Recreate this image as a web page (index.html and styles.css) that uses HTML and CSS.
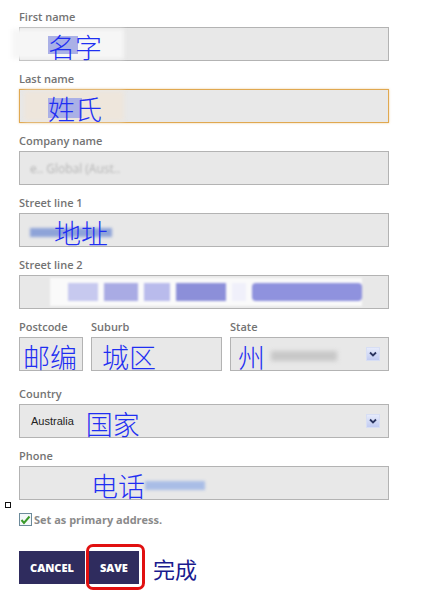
FILE: index.html
```html
<!DOCTYPE html>
<html lang="en">

<head>
    <meta charset="UTF-8">
    <meta name="viewport" content="width=device-width, initial-scale=1.0">
    <title>Edit address</title>
    <link rel="stylesheet" href="styles.css">
</head>

<body>
    <form class="address-form">
        <div class="field">
            <label class="field-label">First name</label>
            <div class="input">
                <span class="patch patch-first"></span>
                <span class="note note-first"><span class="mark mark-first"></span>名字</span>
            </div>
        </div>

        <div class="field">
            <label class="field-label">Last name</label>
            <div class="input input-focus">
                <span class="patch patch-last"></span>
                <span class="note note-last"><span class="mark mark-last"></span>姓氏</span>
            </div>
        </div>

        <div class="field">
            <label class="field-label">Company name</label>
            <div class="input">
                <span class="fuzzy fuzzy-company">e.. Global (Aust..</span>
            </div>
        </div>

        <div class="field">
            <label class="field-label">Street line 1</label>
            <div class="input">
                <span class="bar bar-street"></span>
                <span class="note note-street">地址</span>
            </div>
        </div>

        <div class="field">
            <label class="field-label">Street line 2</label>
            <div class="input">
                <div class="pixels">
                    <span class="px px-a"></span>
                    <span class="px px-b"></span>
                    <span class="px px-c"></span>
                    <span class="px px-d"></span>
                    <span class="px px-e"></span>
                    <span class="px px-f"></span>
                </div>
            </div>
        </div>

        <div class="field-row">
            <div class="field postcode">
                <label class="field-label">Postcode</label>
                <div class="input input-tight">
                    <span class="note">邮编</span>
                </div>
            </div>
            <div class="field suburb">
                <label class="field-label">Suburb</label>
                <div class="input">
                    <span class="note">城区</span>
                </div>
            </div>
            <div class="field state">
                <label class="field-label">State</label>
                <div class="input select">
                    <span class="note">州</span>
                    <span class="fuzzy-grey"></span>
                    <span class="arrow">
                        <svg width="8" height="6" viewBox="0 0 8 6"><path d="M1 1.5 L4 4.5 L7 1.5" fill="none" stroke="#2b3560" stroke-width="1.8"/></svg>
                    </span>
                </div>
            </div>
        </div>

        <div class="field country">
            <label class="field-label">Country</label>
            <div class="input select">
                <span class="option">Australia</span>
                <span class="note note-country">国家</span>
                <span class="arrow">
                    <svg width="8" height="6" viewBox="0 0 8 6"><path d="M1 1.5 L4 4.5 L7 1.5" fill="none" stroke="#2b3560" stroke-width="1.8"/></svg>
                </span>
            </div>
        </div>

        <div class="field">
            <label class="field-label">Phone</label>
            <div class="input">
                <span class="note note-phone">电话</span>
                <span class="bar bar-phone"></span>
            </div>
        </div>

        <div class="stray"></div>

        <label class="primary">
            <span class="check">
                <svg width="11" height="10" viewBox="0 0 11 10"><path d="M1.5 5 L4 8 L9.5 1.5" fill="none" stroke="#3a9a2a" stroke-width="2"/></svg>
            </span>
            Set as primary address.
        </label>

        <div class="actions">
            <button type="button" class="btn">Cancel</button>
            <span class="highlight">
                <button type="button" class="btn">Save</button>
            </span>
            <span class="done">完成</span>
        </div>
    </form>
</body>

</html>
```

FILE: styles.css
```css
body {
    margin: 0;
    background-color: white;
    font-family: "Open Sans", Arial, sans-serif;
}

.address-form {
    padding: 10px 0 0 19px;
    width: 370px;
}

.field {
    margin-bottom: 11px;
}

.field-label {
    display: block;
    font-size: 11px;
    font-weight: 600;
    line-height: 14px;
    color: #737373;
    margin-bottom: 3px;
}

.input {
    position: relative;
    height: 34px;
    box-sizing: border-box;
    border: 1px solid #b3b3b3;
    background-color: #e8e8e8;
    display: flex;
    align-items: center;
    padding-left: 10px;
}

.input-focus {
    border-color: #e0a850;
    box-shadow: 0 0 2px rgba(224, 168, 80, 0.6);
}

.note {
    position: relative;
    font-family: "Noto Sans CJK SC", sans-serif;
    font-size: 27px;
    font-weight: 300;
    line-height: 34px;
    color: #1f2ff2;
    margin-top: 6px;
}

.patch {
    position: absolute;
    top: 1px;
    bottom: 1px;
    background-color: #f6f6f6;
    filter: blur(2px);
}

.patch-first {
    left: -8px;
    width: 112px;
}

.patch-last {
    left: 4px;
    width: 100px;
    background-color: #eee6dc;
}

.mark {
    position: absolute;
    background-color: #aab0e6;
    z-index: -1;
}

.note-first {
    margin-left: 18px;
    z-index: 1;
}

.mark-first {
    left: 0;
    top: 6px;
    width: 30px;
    height: 18px;
}

.note-last {
    margin-left: 18px;
    z-index: 1;
}

.mark-last {
    left: 0;
    top: 6px;
    width: 34px;
    height: 20px;
}

.fuzzy-company {
    font-size: 12px;
    color: #b5b5b5;
    filter: blur(1.2px);
    margin-left: 0;
}

.bar {
    position: relative;
    height: 9px;
    filter: blur(1.5px);
}

.bar-street {
    width: 82px;
    background-color: #8ea3d8;
    margin-left: 0;
    margin-top: 4px;
}

.note-street {
    margin-left: -58px;
}

.note-phone {
    margin-left: 61px;
}

.bar-phone {
    width: 60px;
    background-color: #a9bde6;
    margin-top: 4px;
}

.pixels {
    display: flex;
    align-items: center;
    gap: 6px;
    height: 28px;
    margin-left: 20px;
    background-color: #fafafa;
    filter: blur(0.8px);
}

.px {
    height: 18px;
    background-color: #9fa3e0;
}

.px-a { width: 30px; background-color: #c7c9ef; margin-left: 18px; }
.px-b { width: 34px; background-color: #a9abe4; }
.px-c { width: 26px; background-color: #b9bbec; }
.px-d { width: 50px; background-color: #8c8fd9; }
.px-e { width: 14px; background-color: #f0f0fa; }
.px-f { width: 110px; background-color: #8f92de; border-radius: 4px; }

.field-row {
    display: flex;
    gap: 8px;
    margin-bottom: 16px;
}

.field-row .field {
    margin-bottom: 0;
}

.postcode {
    width: 64px;
}

.suburb {
    width: 131px;
}

.state {
    flex: 1;
}

.input-tight {
    padding-left: 3px;
}

.select {
    padding-right: 8px;
}

.state .note {
    margin-left: -3px;
}

.fuzzy-grey {
    width: 66px;
    height: 10px;
    margin: 4px 0 0 6px;
    background-color: #c8c8c8;
    filter: blur(2px);
}

.arrow {
    margin-left: auto;
    width: 14px;
    height: 14px;
    box-sizing: border-box;
    border: 1px solid #d7def4;
    background: linear-gradient(#e6ebfb, #c1cbf2);
    display: flex;
    align-items: center;
    justify-content: center;
}

.option {
    font-family: "Liberation Sans", Arial, sans-serif;
    font-size: 11px;
    color: #222;
    margin-left: 1px;
}

.note-country {
    margin-left: 12px;
}

.stray {
    width: 4px;
    height: 4px;
    border: 1px solid #111;
    margin: -9px 0 0 -14px;
}

.primary {
    display: flex;
    align-items: center;
    gap: 2px;
    margin-top: 4px;
    font-size: 11px;
    font-weight: 700;
    color: #8a8a8a;
}

.check {
    width: 13px;
    height: 13px;
    box-sizing: border-box;
    border: 1px solid #6c8a9a;
    background-color: #f4f8fa;
    display: flex;
    align-items: center;
    justify-content: center;
}

.actions {
    display: flex;
    align-items: center;
    margin-top: 17px;
}

.btn {
    height: 33px;
    padding: 0 11px;
    background-color: #2f2c5e;
    color: white;
    border: none;
    font-family: "Open Sans", Arial, sans-serif;
    font-size: 11px;
    font-weight: 800;
    text-transform: uppercase;
    cursor: pointer;
}

.highlight {
    display: flex;
    margin-left: 1px;
    padding: 4px 3px 3px 0;
    border: 3px solid #e11010;
    border-radius: 7px;
}

.highlight .btn {
    padding: 0 11px;
}

.done {
    font-family: "Noto Sans CJK SC", sans-serif;
    font-size: 22px;
    color: #1a1a8e;
    margin: 2px 0 0 8px;
}
```
